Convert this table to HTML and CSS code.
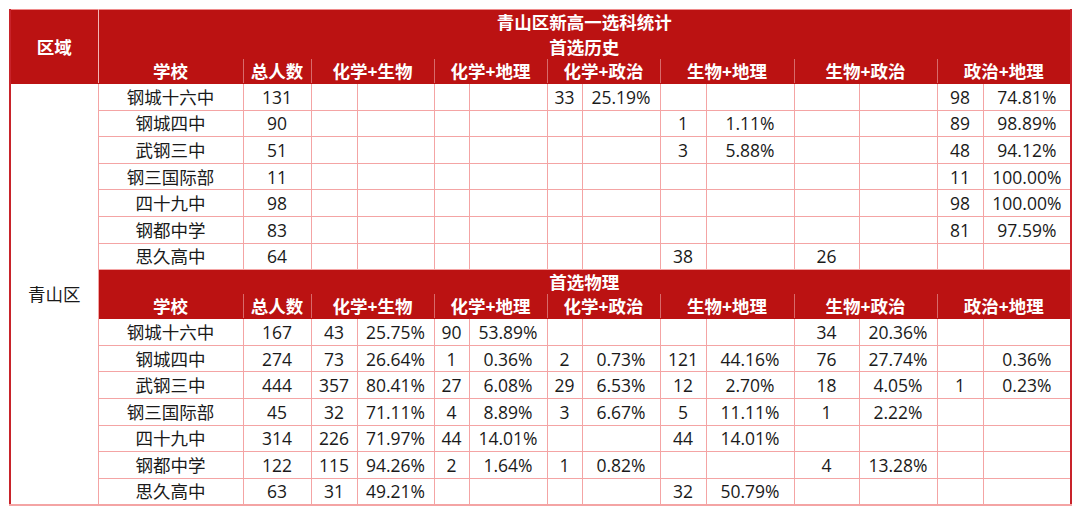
FILE: index.html
```html
<!DOCTYPE html>
<html lang="zh-CN">
<head>
<meta charset="utf-8">
<title>青山区新高一选科统计</title>
<link rel="stylesheet" href="styles.css">
</head>
<body>
<div class="wrap">
<table class="stat">
<colgroup>
<col class="c-region"><col class="c-school"><col class="c-total">
<col class="c46"><col class="c77">
<col class="c35"><col class="c78">
<col class="c35"><col class="c78">
<col class="c46"><col class="c88">
<col class="c65"><col class="c78">
<col class="c46"><col class="c88">
</colgroup>
<tbody>
<tr class="h1"><th class="region-h" rowspan="3">区域</th><th class="title" colspan="14">青山区新高一选科统计</th></tr>
<tr class="h2"><th class="sub" colspan="14">首选历史</th></tr>
<tr class="h3"><th>学校</th><th>总人数</th><th colspan="2">化学+生物</th><th colspan="2">化学+地理</th><th colspan="2">化学+政治</th><th colspan="2">生物+地理</th><th colspan="2">生物+政治</th><th colspan="2">政治+地理</th></tr>
<tr class="d"><td class="region" rowspan="16">青山区</td><td>钢城十六中</td><td>131</td><td></td><td></td><td></td><td></td><td>33</td><td>25.19%</td><td></td><td></td><td></td><td></td><td>98</td><td>74.81%</td></tr>
<tr class="d"><td>钢城四中</td><td>90</td><td></td><td></td><td></td><td></td><td></td><td></td><td>1</td><td>1.11%</td><td></td><td></td><td>89</td><td>98.89%</td></tr>
<tr class="d"><td>武钢三中</td><td>51</td><td></td><td></td><td></td><td></td><td></td><td></td><td>3</td><td>5.88%</td><td></td><td></td><td>48</td><td>94.12%</td></tr>
<tr class="d"><td>钢三国际部</td><td>11</td><td></td><td></td><td></td><td></td><td></td><td></td><td></td><td></td><td></td><td></td><td>11</td><td>100.00%</td></tr>
<tr class="d"><td>四十九中</td><td>98</td><td></td><td></td><td></td><td></td><td></td><td></td><td></td><td></td><td></td><td></td><td>98</td><td>100.00%</td></tr>
<tr class="d"><td>钢都中学</td><td>83</td><td></td><td></td><td></td><td></td><td></td><td></td><td></td><td></td><td></td><td></td><td>81</td><td>97.59%</td></tr>
<tr class="d"><td>思久高中</td><td>64</td><td></td><td></td><td></td><td></td><td></td><td></td><td>38</td><td></td><td>26</td><td></td><td></td><td></td></tr>
<tr class="h2 mid"><th class="sub" colspan="14">首选物理</th></tr>
<tr class="h3"><th>学校</th><th>总人数</th><th colspan="2">化学+生物</th><th colspan="2">化学+地理</th><th colspan="2">化学+政治</th><th colspan="2">生物+地理</th><th colspan="2">生物+政治</th><th colspan="2">政治+地理</th></tr>
<tr class="d"><td>钢城十六中</td><td>167</td><td>43</td><td>25.75%</td><td>90</td><td>53.89%</td><td></td><td></td><td></td><td></td><td>34</td><td>20.36%</td><td></td><td></td></tr>
<tr class="d"><td>钢城四中</td><td>274</td><td>73</td><td>26.64%</td><td>1</td><td>0.36%</td><td>2</td><td>0.73%</td><td>121</td><td>44.16%</td><td>76</td><td>27.74%</td><td></td><td>0.36%</td></tr>
<tr class="d"><td>武钢三中</td><td>444</td><td>357</td><td>80.41%</td><td>27</td><td>6.08%</td><td>29</td><td>6.53%</td><td>12</td><td>2.70%</td><td>18</td><td>4.05%</td><td>1</td><td>0.23%</td></tr>
<tr class="d"><td>钢三国际部</td><td>45</td><td>32</td><td>71.11%</td><td>4</td><td>8.89%</td><td>3</td><td>6.67%</td><td>5</td><td>11.11%</td><td>1</td><td>2.22%</td><td></td><td></td></tr>
<tr class="d"><td>四十九中</td><td>314</td><td>226</td><td>71.97%</td><td>44</td><td>14.01%</td><td></td><td></td><td>44</td><td>14.01%</td><td></td><td></td><td></td><td></td></tr>
<tr class="d"><td>钢都中学</td><td>122</td><td>115</td><td>94.26%</td><td>2</td><td>1.64%</td><td>1</td><td>0.82%</td><td></td><td></td><td>4</td><td>13.28%</td><td></td><td></td></tr>
<tr class="d last"><td>思久高中</td><td>63</td><td>31</td><td>49.21%</td><td></td><td></td><td></td><td></td><td>32</td><td>50.79%</td><td></td><td></td><td></td><td></td></tr>
</tbody>
</table>
</div>
</body>
</html>
```

FILE: styles.css
```css
html, body {
  margin: 0;
  padding: 0;
  background: #ffffff;
}

.wrap {
  padding: 9px 0 0 9px;
}

.stat {
  border-collapse: collapse;
  table-layout: fixed;
  width: 1061px;
  font-family: "Open Sans", "Noto Sans CJK SC", sans-serif;
  color: #1a1a1a;
  border-left: 2px solid #c8232a;
  border-right: 2px solid #c8232a;
}

.c-region { width: 88px; }
.c-school { width: 145px; }
.c-total { width: 68px; }
.c46 { width: 46px; }
.c77 { width: 77px; }
.c35 { width: 35px; }
.c78 { width: 78px; }
.c88 { width: 88px; }
.c65 { width: 65px; }

.stat th,
.stat td {
  padding: 0;
  text-align: center;
  vertical-align: middle;
  white-space: nowrap;
  overflow: hidden;
}

.stat th {
  background: #bb1212;
  color: #ffffff;
  font-weight: 700;
  font-size: 17.5px;
  line-height: 20px;
  border: 1px solid #bb1212;
}

.stat td {
  font-size: 17.5px;
  line-height: 20px;
  border: 1px solid #f4a4a4;
}

.h1 { height: 25px; }
.h2 { height: 24px; }
.h3 { height: 25px; }
.d { height: 26.6px; }

.stat .h1 th { border-top: 1px solid #ef8a8a; }

.stat .region-h {
  border-right: 1px solid #f2b5b5;
  border-top: 1px solid #ef8a8a;
}

.stat .h3 th {
  border-left: 1px solid #d86a6a;
  border-right: 1px solid #d86a6a;
}

.stat .h3 th:first-child {
  border-left: 1px solid #f4a4a4;
}

.stat .mid th {
  border-left: 1px solid #f4a4a4;
  border-top: 1px solid #f4a4a4;
}

.stat .last td,
.stat td.region {
  border-bottom: 2px solid #f4a4a4;
}
```
